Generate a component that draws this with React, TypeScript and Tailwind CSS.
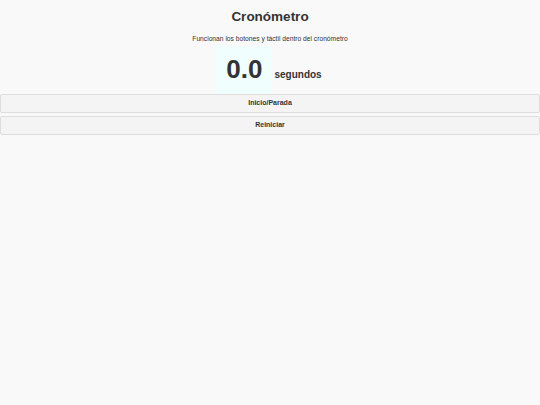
import { useEffect, useRef, useState } from 'react';

export default function App() {
  const [running, setRunning] = useState(false);
  const [elapsed, setElapsed] = useState(0);
  const startRef = useRef(0);

  useEffect(() => {
    if (!running) return;
    startRef.current = Date.now() - elapsed * 1000;
    const id = setInterval(() => {
      setElapsed((Date.now() - startRef.current) / 1000);
    }, 100);
    return () => clearInterval(id);
  }, [running]);

  const toggle = () => setRunning((r) => !r);
  const reset = () => {
    setRunning(false);
    setElapsed(0);
  };

  return (
    <div
      className="min-h-[405px] w-full bg-[#f9f9f9] text-[#333333]"
      style={{ fontFamily: '"Liberation Sans", Arial, sans-serif' }}
    >
      <h1 className="pt-[8px] text-center text-[13.5px] font-bold leading-[18px]">Cronómetro</h1>
      <p className="mt-[8px] text-center text-[6.7px] leading-[10px]">
        Funcionan los botones y táctil dentro del cronómetro
      </p>
      <div className="mt-[2px] flex items-baseline justify-center gap-[2px] pr-[2px]">
        <div
          onClick={toggle}
          className="cursor-pointer bg-[#f0fefe] px-[10px] pt-[8px] pb-[10px] text-[26px] font-bold leading-[30px]"
        >
          {elapsed.toFixed(1)}
        </div>
        <span className="text-[10px] font-bold">segundos</span>
      </div>
      <div className="flex flex-col gap-[3px]">
        <button
          onClick={toggle}
          className="h-[19px] w-full rounded-[2px] border border-[#dddddd] bg-[#f4f4f4] text-[7px] font-bold text-[#333333]"
        >
          Inicio/Parada
        </button>
        <button
          onClick={reset}
          className="h-[19px] w-full rounded-[2px] border border-[#dddddd] bg-[#f4f4f4] text-[7px] font-bold text-[#333333]"
        >
          Reiniciar
        </button>
      </div>
    </div>
  );
}
